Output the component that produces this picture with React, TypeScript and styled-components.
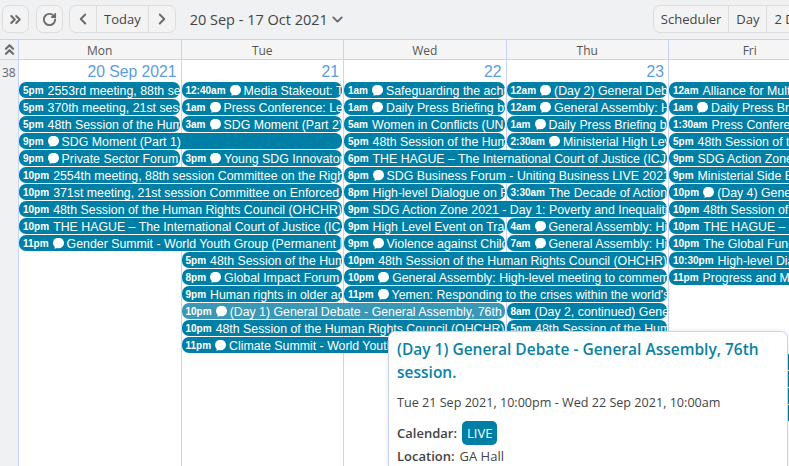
import React from "react";
import styled, { createGlobalStyle } from "styled-components";
import {
  LuChevronDown,
  LuChevronLeft,
  LuChevronRight,
  LuChevronsRight,
  LuChevronsUp,
  LuRotateCw,
} from "react-icons/lu";

const GlobalStyle = createGlobalStyle`
  html, body {
    margin: 0;
    padding: 0;
    overflow: hidden;
    background: #f0f1f3;
  }
`;

const Page = styled.div`
  position: relative;
  width: 789px;
  height: 466px;
  overflow: hidden;
  font-family: "Open Sans", "Noto Sans", sans-serif;
  color: #444;
`;

const Toolbar = styled.div`
  display: flex;
  align-items: flex-start;
  width: 1180px;
  height: 39px;
  padding: 5px 2px 0;
  box-sizing: border-box;
`;

const ButtonGroup = styled.div<{ $push?: number }>`
  display: flex;
  height: 26px;
  margin-left: ${({ $push }) => $push ?? 8}px;
  flex-shrink: 0;
  background: #f3f3f4;
  border: 1px solid #dcdcde;
  border-radius: 7px;
`;

const ToolButton = styled.div<{ $w?: number }>`
  display: flex;
  align-items: center;
  justify-content: center;
  width: ${({ $w }) => ($w ? `${$w}px` : "auto")};
  padding: ${({ $w }) => ($w ? "0" : "0 7px")};
  font-size: 13px;
  color: #444;
  border-left: 1px solid #dcdcde;
  &:first-child {
    border-left: none;
  }
  svg {
    color: #6b6b6b;
  }
`;

const DateRange = styled.div`
  display: flex;
  align-items: center;
  gap: 1px;
  height: 28px;
  margin-left: 14px;
  font-size: 14.5px;
  color: #444;
  svg {
    color: #666;
  }
`;

const Grid = styled.div`
  display: grid;
  width: 1156px;
  grid-template-columns: 18px repeat(7, 162.5px);
  grid-template-rows: 20px 22px repeat(20, 17px) 1fr;
  height: 427px;
  border-top: 1px solid #c8d3fb;
  background: #fff;
`;

const CornerCell = styled.div`
  display: flex;
  align-items: center;
  justify-content: center;
  background: #f0f1f3;
  border-bottom: 1px solid #c8d3fb;
  color: #6b6b6b;
`;

const HeadCell = styled.div<{ $col: number }>`
  grid-column: ${({ $col }) => $col + 2};
  grid-row: 1;
  display: flex;
  align-items: center;
  justify-content: center;
  padding-top: 2px;
  background: #f5f5f5;
  border-left: 1px solid #c8d3fb;
  border-bottom: 1px solid #c8d3fb;
  font-size: 12px;
  color: #555;
`;

const WeekCell = styled.div`
  grid-column: 1;
  grid-row: 2 / -1;
  background: #f0f1f3;
  font-size: 12px;
  line-height: 25px;
  color: #666;
  padding-left: 2px;
`;

const DayColumn = styled.div<{ $col: number }>`
  grid-column: ${({ $col }) => $col + 2};
  grid-row: 2 / -1;
  border-left: 1px solid #c8d3fb;
`;

const DayNumber = styled.div<{ $col: number }>`
  grid-column: ${({ $col }) => $col + 2};
  grid-row: 2;
  align-self: center;
  text-align: right;
  padding: 2px 4px 0 0;
  font-family: "Liberation Sans", Arial, sans-serif;
  font-size: 15.7px;
  color: #5b9ddf;
`;

const EventBar = styled.div<{ $col: number; $span: number; $row: number; $active?: boolean }>`
  grid-column: ${({ $col }) => $col + 2} / span ${({ $span }) => $span};
  grid-row: ${({ $row }) => $row + 3};
  display: flex;
  align-items: center;
  height: 16px;
  min-width: 0;
  margin: 0 1px;
  padding: 1px 1px 0 4px;
  box-sizing: border-box;
  overflow: hidden;
  white-space: nowrap;
  border-radius: 7px;
  background: ${({ $active }) => ($active ? "#3a98b6" : "#007fa6")};
  color: #fff;
  font-family: "Liberation Sans", Arial, sans-serif;
  font-size: 12.35px;
  z-index: 1;
`;

const EventTime = styled.b`
  font-size: 10px;
  margin-right: 4px;
  flex-shrink: 0;
`;

const BubbleIcon = styled.svg`
  width: 11px;
  height: 11px;
  margin: -1px 3px 0 0;
  flex-shrink: 0;
`;

const Bubble = () => (
  <BubbleIcon viewBox="0 0 11 11" fill="#fff">
    <ellipse cx="5.5" cy="5" rx="5.5" ry="5.2" />
    <path d="M2 8 L1.4 10.8 L5 9.8 Z" />
  </BubbleIcon>
);

const Popover = styled.div`
  position: absolute;
  left: 388px;
  top: 331px;
  width: 400px;
  height: 160px;
  box-sizing: border-box;
  padding: 6px 8px;
  background: #fff;
  border: 1px solid #c8d3fb;
  border-radius: 7px;
  box-shadow: 0 0 5px rgba(0, 0, 0, 0.1);
  z-index: 5;
  font-size: 12.6px;
`;

const PopTitle = styled.div`
  font-size: 15.5px;
  font-weight: 600;
  line-height: 23px;
  color: #0a82a6;
`;

const PopWhen = styled.div`
  margin-top: 10px;
  line-height: 18px;
`;

const PopLine = styled.div`
  display: flex;
  align-items: center;
  gap: 5px;
  margin-top: 2px;
  min-height: 18px;
  font-size: 13px;
  b {
    font-weight: 600;
  }
`;

const CalendarLine = styled(PopLine)`
  margin-top: 9px;
`;

const Tag = styled.span`
  display: flex;
  align-items: center;
  height: 24px;
  padding: 0 5px;
  border-radius: 5px;
  background: #007fa6;
  color: #fff;
`;

type Ev = { col: number; span?: number; row: number; time: string; text: string; chat?: boolean; active?: boolean };

const HRC = "48th Session of the Human Rights Council (OHCHR)";
const ICJ = "THE HAGUE – The International Court of Justice (ICJ)";

const events: Ev[] = [
  { col: 0, row: 0, time: "5pm", text: "2553rd meeting, 88th session Committee" },
  { col: 0, row: 1, time: "5pm", text: "370th meeting, 21st session Committee" },
  { col: 0, row: 2, time: "5pm", text: HRC },
  { col: 0, span: 2, row: 3, time: "9pm", text: "SDG Moment (Part 1)", chat: true },
  { col: 0, row: 4, time: "9pm", text: "Private Sector Forum", chat: true },
  { col: 0, span: 2, row: 5, time: "10pm", text: "2554th meeting, 88th session Committee on the Rights of the Child" },
  { col: 0, span: 2, row: 6, time: "10pm", text: "371st meeting, 21st session Committee on Enforced Disappearances" },
  { col: 0, span: 2, row: 7, time: "10pm", text: HRC },
  { col: 0, span: 2, row: 8, time: "10pm", text: ICJ },
  { col: 0, span: 2, row: 9, time: "11pm", text: "Gender Summit - World Youth Group (Permanent Missions)", chat: true },

  { col: 1, row: 0, time: "12:40am", text: "Media Stakeout: The Secretary-General", chat: true },
  { col: 1, row: 1, time: "1am", text: "Press Conference: Leaders", chat: true },
  { col: 1, row: 2, time: "3am", text: "SDG Moment (Part 2)", chat: true },
  { col: 1, row: 4, time: "3pm", text: "Young SDG Innovators Programme", chat: true },
  { col: 1, row: 10, time: "5pm", text: HRC },
  { col: 1, row: 11, time: "8pm", text: "Global Impact Forum", chat: true },
  { col: 1, row: 12, time: "9pm", text: "Human rights in older age and beyond" },
  { col: 1, span: 2, row: 13, time: "10pm", text: "(Day 1) General Debate - General Assembly, 76th session.", chat: true, active: true },
  { col: 1, span: 2, row: 14, time: "10pm", text: HRC },
  { col: 1, span: 2, row: 15, time: "11pm", text: "Climate Summit - World Youth Group", chat: true },

  { col: 2, row: 0, time: "1am", text: "Safeguarding the achievements", chat: true },
  { col: 2, row: 1, time: "1am", text: "Daily Press Briefing by the Office", chat: true },
  { col: 2, row: 2, time: "5am", text: "Women in Conflicts (UN Women)" },
  { col: 2, row: 3, time: "5pm", text: HRC },
  { col: 2, span: 2, row: 4, time: "6pm", text: ICJ },
  { col: 2, span: 2, row: 5, time: "8pm", text: "SDG Business Forum - Uniting Business LIVE 2021", chat: true },
  { col: 2, row: 6, time: "8pm", text: "High-level Dialogue on Food Systems" },
  { col: 2, span: 2, row: 7, time: "9pm", text: "SDG Action Zone 2021 - Day 1: Poverty and Inequalities" },
  { col: 2, row: 8, time: "9pm", text: "High Level Event on Transforming" },
  { col: 2, row: 9, time: "9pm", text: "Violence against Children", chat: true },
  { col: 2, span: 2, row: 10, time: "10pm", text: HRC },
  { col: 2, span: 2, row: 11, time: "10pm", text: "General Assembly: High-level meeting to commemorate", chat: true },
  { col: 2, span: 2, row: 12, time: "11pm", text: "Yemen: Responding to the crises within the world's largest", chat: true },

  { col: 3, row: 0, time: "12am", text: "(Day 2) General Debate - General", chat: true },
  { col: 3, row: 1, time: "12am", text: "General Assembly: High-level", chat: true },
  { col: 3, row: 2, time: "1am", text: "Daily Press Briefing by the Office", chat: true },
  { col: 3, row: 3, time: "2:30am", text: "Ministerial High Level", chat: true },
  { col: 3, row: 6, time: "3:30am", text: "The Decade of Action for" },
  { col: 3, row: 8, time: "4am", text: "General Assembly: High-level", chat: true },
  { col: 3, row: 9, time: "7am", text: "General Assembly: High-level", chat: true },
  { col: 3, row: 13, time: "8am", text: "(Day 2, continued) General Debate" },
  { col: 3, row: 14, time: "5pm", text: HRC },

  { col: 4, row: 0, time: "12am", text: "Alliance for Multilateralism" },
  { col: 4, row: 1, time: "1am", text: "Daily Press Briefing by the Office", chat: true },
  { col: 4, row: 2, time: "1:30am", text: "Press Conference" },
  { col: 4, row: 3, time: "5pm", text: HRC },
  { col: 4, row: 4, time: "9pm", text: "SDG Action Zone 2021" },
  { col: 4, row: 5, time: "9pm", text: "Ministerial Side Event" },
  { col: 4, row: 6, time: "10pm", text: "(Day 4) General Debate", chat: true },
  { col: 4, row: 7, time: "10pm", text: HRC },
  { col: 4, row: 8, time: "10pm", text: ICJ },
  { col: 4, row: 9, time: "10pm", text: "The Global Fund" },
  { col: 4, row: 10, time: "10:30pm", text: "High-level Dialogue" },
  { col: 4, row: 11, time: "11pm", text: "Progress and Multilateralism" },
  // these sit behind the popover, only their right edge peeks out
  { col: 4, row: 16, time: "", text: "" },
  { col: 4, row: 17, time: "", text: "" },
  { col: 4, row: 18, time: "", text: "" },
  { col: 4, row: 19, time: "", text: "" },
];

const days = ["Mon", "Tue", "Wed", "Thu", "Fri", "Sat", "Sun"];
const numbers = ["20 Sep 2021", "21", "22", "23", "24", "25", "26"];

export default function App() {
  return (
    <Page>
      <GlobalStyle />
      <Toolbar>
        <ButtonGroup $push={0}>
          <ToolButton $w={25}>
            <LuChevronsRight size={17} strokeWidth={2.8} />
          </ToolButton>
        </ButtonGroup>
        <ButtonGroup $push={6.5}>
          <ToolButton $w={25}>
            <LuRotateCw size={15} strokeWidth={3} />
          </ToolButton>
        </ButtonGroup>
        <ButtonGroup $push={6.5}>
          <ToolButton $w={26}>
            <LuChevronLeft size={18} strokeWidth={2.6} />
          </ToolButton>
          <ToolButton>Today</ToolButton>
          <ToolButton $w={26}>
            <LuChevronRight size={18} strokeWidth={2.6} />
          </ToolButton>
        </ButtonGroup>
        <DateRange>
          20 Sep - 17 Oct 2021
          <LuChevronDown size={17} strokeWidth={2.5} />
        </DateRange>
        <ButtonGroup $push={307}>
          <ToolButton>Scheduler</ToolButton>
          <ToolButton>Day</ToolButton>
          <ToolButton>2 Days</ToolButton>
          <ToolButton>Week</ToolButton>
          <ToolButton>Month</ToolButton>
        </ButtonGroup>
      </Toolbar>
      <Grid>
        <CornerCell>
          <LuChevronsUp size={17} strokeWidth={3} />
        </CornerCell>
        <WeekCell>38</WeekCell>
        {days.map((d, i) => (
          <HeadCell key={d} $col={i}>
            {d}
          </HeadCell>
        ))}
        {days.map((d, i) => (
          <DayColumn key={d} $col={i} />
        ))}
        {numbers.map((n, i) => (
          <DayNumber key={n} $col={i}>
            {n}
          </DayNumber>
        ))}
        {events.map((e) => (
          <EventBar key={`${e.col}-${e.row}`} $col={e.col} $span={e.span ?? 1} $row={e.row} $active={e.active}>
            <EventTime>{e.time}</EventTime>
            {e.chat && <Bubble />}
            {e.text}
          </EventBar>
        ))}
      </Grid>
      <Popover>
        <PopTitle>(Day 1) General Debate - General Assembly, 76th session.</PopTitle>
        <PopWhen>Tue 21 Sep 2021, 10:00pm - Wed 22 Sep 2021, 10:00am</PopWhen>
        <CalendarLine>
          <b>Calendar:</b> <Tag>LIVE</Tag>
        </CalendarLine>
        <PopLine>
          <b>Location:</b> GA Hall
        </PopLine>
      </Popover>
    </Page>
  );
}
